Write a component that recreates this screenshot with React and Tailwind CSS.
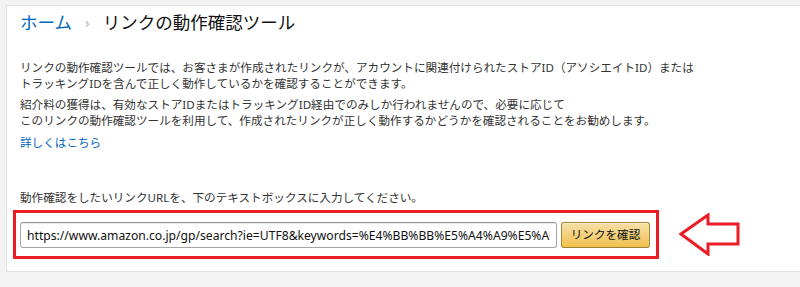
import React from 'react';

const jp = { fontFamily: '"Noto Sans", "Noto Sans CJK JP", sans-serif' };

const Arrow = () => (
    <svg width="61" height="43" viewBox="0 0 61 43" className="shrink-0">
        <polygon
            points="2,21 29,2 29,11 59,11 59,31 29,31 29,41"
            fill="white"
            stroke="#ec1c24"
            strokeWidth="3"
            strokeLinejoin="miter"
        />
    </svg>
);

export default function App() {
    return (
        <div className="w-[800px] h-[287px] bg-[#f3f3f3] pt-[5px] pl-[6px] overflow-hidden" style={jp}>
            <div className="bg-white border border-[#e2e2e2] border-r-0 h-[267px] w-[800px] pl-[13px] pt-[4px] text-[#333]">
                {/* breadcrumb */}
                <div className="flex items-center h-[24px] text-[17.5px] leading-[24px]">
                    <span className="text-[#0066c0]">ホーム</span>
                    <span className="text-[#b5b5b5] text-[15px] mx-[13px]">›</span>
                    <span className="text-[#111]">リンクの動作確認ツール</span>
                </div>

                <div className="mt-[26px] text-[11.6px] leading-[16px]">
                    <p>リンクの動作確認ツールでは、お客さまが作成されたリンクが、アカウントに関連付けられたストアID（アソシエイトID）または</p>
                    <p>トラッキングIDを含んで正しく動作しているかを確認することができます。</p>
                </div>
                <div className="mt-[5px] text-[11.6px] leading-[16px]">
                    <p>紹介料の獲得は、有効なストアIDまたはトラッキングID経由でのみしか行われませんので、必要に応じて</p>
                    <p>このリンクの動作確認ツールを利用して、作成されたリンクが正しく動作するかどうかを確認されることをお勧めします。</p>
                </div>
                <div className="mt-[6px] text-[11.6px] leading-[16px]">
                    <a className="text-[#0066c0] cursor-pointer">詳しくはこちら</a>
                </div>

                <div className="mt-[39px] text-[11.6px] leading-[16px]">
                    動作確認をしたいリンクURLを、下のテキストボックスに入力してください。
                </div>

                <div className="flex items-center mt-[4px] -ml-[7px]">
                    <div className="w-[646px] border-[3px] border-[#ec1c24] pl-[4px] pr-[6px] pt-[9px] pb-[8px] flex gap-[4px]">
                        <input
                            readOnly
                            defaultValue="https://www.amazon.co.jp/gp/search?ie=UTF8&keywords=%E4%BB%BB%E5%A4%A9%E5%A0%82%E3%82%B9%E3%82%A4%E3%83%83%E3%83%81"
                            className="w-[537px] h-[26px] border border-[#a6a6a6] border-t-[#949494] rounded-[3px] px-[6px] text-[12.15px] text-[#111] outline-none shadow-[inset_0_1px_0_rgba(0,0,0,0.07)]"
                            style={jp}
                        />
                        <button
                            className="w-[89px] h-[26px] rounded-[3px] border border-[#a88734] border-b-[#9c7e31] bg-gradient-to-b from-[#f7dfa5] to-[#f0c14b] text-[11.6px] text-[#111] shadow-[inset_0_1px_0_rgba(255,255,255,0.4)]"
                            style={jp}
                        >
                            リンクを確認
                        </button>
                    </div>
                    <div className="ml-[20px]">
                        <Arrow />
                    </div>
                </div>
            </div>
        </div>
    );
}
